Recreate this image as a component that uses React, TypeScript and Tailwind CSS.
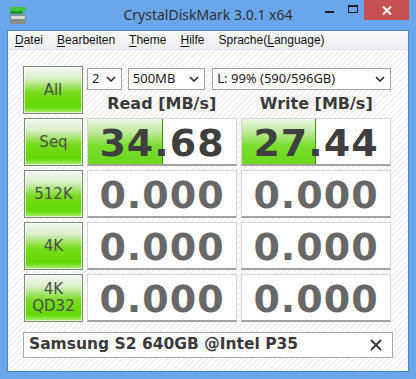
import React from "react"

const btn =
  "flex flex-col items-center justify-center border border-[#7d8b7d] bg-[linear-gradient(to_bottom,#f6f8f5_0%,#d8eec8_25%,#78dc1c_55%,#62d800_86%,#a8ee78_100%)] text-[15px] leading-[17px] text-[#4c4c4c] [font-family:'DejaVu_Sans',sans-serif] shadow-[inset_0_0_0_1px_rgba(255,255,255,0.6)]"

const box =
  "relative flex items-center justify-center bg-white border border-[#d6d6d6] border-b-2 border-b-[#a3a3a3] overflow-hidden"

function Value({ v, pct, dark }: { v: string; pct: number; dark?: boolean }) {
  return (
    <div className={box}>
      {pct > 0 && (
        <div
          className="absolute left-0 top-0 bottom-0 border-r border-r-[#3c8f12] bg-[linear-gradient(to_bottom,#eef8e6_0%,#bde89a_30%,#7ade2c_60%,#6ad81c_100%)]"
          style={{ width: `${pct}%` }}
        />
      )}
      <span
        className={
          "relative font-bold text-[38px] leading-none tracking-[1px] mt-[2px] [font-family:'DejaVu_Sans',sans-serif] " +
          (dark ? "text-[#3f3f3f]" : "text-[#686868]")
        }
      >
        {v}
      </span>
    </div>
  )
}

function Select({ label, w }: { label: string; w: string }) {
  return (
    <div
      className={
        "flex items-center justify-between h-[22px] border border-[#a0a0a0] bg-white pl-[4px] pr-[5px] text-[13px] text-[#1a1a1a] [font-family:'Noto_Sans',sans-serif] " +
        w
      }
    >
      <span>{label}</span>
      <svg width="10" height="6" viewBox="0 0 10 6">
        <path d="M1 1l4 4 4-4" fill="none" stroke="#222" strokeWidth="1.5" />
      </svg>
    </div>
  )
}

function U({ c }: { c: string }) {
  return <span className="underline underline-offset-2">{c}</span>
}

export default function App() {
  const rows = [
    { label: ["512K"], r: "0.000", w: "0.000" },
    { label: ["4K"], r: "0.000", w: "0.000" },
    { label: ["4K", "QD32"], r: "0.000", w: "0.000" },
  ]

  return (
    <div className="w-[416px] h-[379px] bg-[#6aa6ec] flex flex-col [font-family:'Noto_Sans',sans-serif]">
      {/* title bar */}
      <div className="h-[30px] grid grid-cols-[1fr_auto_1fr] items-start">
        <div className="pl-[10px] pt-[7px]">
          <svg width="16" height="17" viewBox="0 0 16 17">
            <rect x="0" y="0" width="16" height="4" rx="1" fill="#3cc43c" />
            <rect x="0" y="4" width="13" height="3" rx="1" fill="#1f9a2a" />
            <rect x="0" y="8" width="16" height="9" rx="2" fill="#8a8a8a" />
            <rect x="1" y="9" width="14" height="3" rx="1" fill="#d8d8d8" />
            <rect x="11" y="13" width="3" height="2" fill="#3fd23f" />
          </svg>
        </div>
        <div className="pt-[4px] text-[14px] text-[#2e2e2e] leading-[22px]">CrystalDiskMark 3.0.1 x64</div>
        <div className="flex justify-end items-start">
          <div className="w-[24px] h-[20px] flex items-center justify-center">
            <div className="w-[9px] h-[2px] bg-[#1e1e1e] mt-[4px]" />
          </div>
          <div className="w-[23px] h-[20px] flex items-center justify-center">
            <div className="w-[10px] h-[8px] border border-[#1e1e1e] border-t-2 mb-[2px]" />
          </div>
          <div className="w-[45px] h-[20px] bg-[#c75050] flex items-center justify-center mr-[7px]">
            <svg width="10" height="9" viewBox="0 0 10 9">
              <path d="M1 0.5l8 8M9 0.5l-8 8" stroke="#fff" strokeWidth="2" />
            </svg>
          </div>
        </div>
      </div>

      {/* client */}
      <div className="mx-[7px] mb-[7px] flex-1 flex flex-col border border-[#4a86cf]">
        <div className="h-[19px] bg-[linear-gradient(to_bottom,#f7f8fa,#eef0f3)] border-b border-[#dfe3e8] flex items-center gap-[14px] pl-[7px] text-[12px] text-[#111] leading-none [font-family:'Liberation_Sans',sans-serif]">
          <span>
            <U c="D" />atei
          </span>
          <span>
            <U c="B" />earbeiten
          </span>
          <span>
            <U c="T" />heme
          </span>
          <span>
            <U c="H" />ilfe
          </span>
          <span>
            Sprache(<U c="L" />anguage)
          </span>
        </div>

        <div className="flex-1 pl-[15px] pr-[15px] pt-[16px] bg-[repeating-linear-gradient(135deg,#ffffff_0px,#ffffff_2px,#f1f1f1_2px,#f1f1f1_4px)]">
          <div className="grid grid-cols-[60px_150px_150px] gap-x-[4px] gap-y-[4px] [&>*:nth-child(3n)]:ml-[1px]">
            <div className={btn + " h-[48px]"}>All</div>
            <div className="col-span-2 flex flex-col h-[48px]">
              <div className="flex gap-[6px] mt-[2px]">
                <Select label="2" w="w-[35px]" />
                <Select label="500MB" w="w-[78px]" />
                <Select label="L: 99% (590/596GB)" w="w-[180px] ml-[1px]" />
              </div>
              <div className="flex mt-[5px] text-[16px] font-bold text-[#3a3a3a] [font-family:'DejaVu_Sans',sans-serif] leading-[18px]">
                <div className="w-[150px] text-center">Read [MB/s]</div>
                <div className="w-[150px] ml-[5px] text-center">Write [MB/s]</div>
              </div>
            </div>

            <div className={btn + " h-[48px]"}>Seq</div>
            <Value v="34.68" pct={51} dark />
            <Value v="27.44" pct={50} dark />

            {rows.map((r, i) => (
              <React.Fragment key={i}>
                <div className={btn + " h-[48px]"}>
                  {r.label.map((l) => (
                    <span key={l}>{l}</span>
                  ))}
                </div>
                <Value v={r.r} pct={0} />
                <Value v={r.w} pct={0} />
              </React.Fragment>
            ))}
          </div>

          <div className="mt-[10px] w-[370px] h-[26px] bg-white border border-[#a8a8a8] flex items-center justify-between pl-[5px] pr-[10px]">
            <span className="font-bold text-[15.5px] text-[#3a3a3a] [font-family:'DejaVu_Sans',sans-serif]">
              Samsung S2 640GB @Intel P35
            </span>
            <svg width="12" height="12" viewBox="0 0 12 12">
              <path d="M1 1l10 10M11 1l-10 10" stroke="#3a3a3a" strokeWidth="2" />
            </svg>
          </div>
        </div>
      </div>
    </div>
  )
}
